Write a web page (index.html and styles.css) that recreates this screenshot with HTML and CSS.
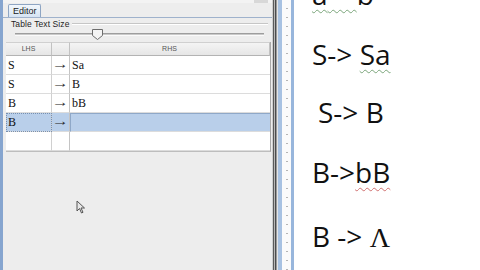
FILE: index.html
```html
<!DOCTYPE html>
<html>
<head>
<meta charset="utf-8">
<link rel="stylesheet" href="styles.css">
</head>
<body>
<div class="screen">
  <div class="editor">
    <div class="topstrip"><span class="topbtn"></span></div>
    <div class="tabs"><div class="tab">Editor</div></div>
    <div class="tabbody">
      <div class="group">
        <div class="group-title"><span>Table Text Size</span><span class="group-line"></span></div>
        <div class="slider">
          <div class="track"></div>
          <svg class="thumb" width="11" height="11" viewBox="0 0 11 11"><path d="M0.5 0.5 H10.5 V6.5 L5.5 10.5 L0.5 6.5 Z" fill="#f4f4f4" stroke="#6d6d6d"/></svg>
        </div>
      </div>
      <div class="table">
        <div class="hcell">LHS</div><div class="hcell"></div><div class="hcell">RHS</div>
        <div class="cell lhs">S</div><div class="cell arr"><span class="arrow">→</span></div><div class="cell rhs">Sa</div>
        <div class="cell lhs">S</div><div class="cell arr"><span class="arrow">→</span></div><div class="cell rhs">B</div>
        <div class="cell lhs">B</div><div class="cell arr"><span class="arrow">→</span></div><div class="cell rhs">bB</div>
        <div class="cell lhs sel focus">B</div><div class="cell arr sel"><span class="arrow">→</span></div><div class="cell rhs sel edit"></div>
        <div class="cell lhs"></div><div class="cell arr"></div><div class="cell rhs"></div>
      </div>
      <svg class="pointer" width="10" height="14" viewBox="0 0 10 14"><path d="M1 1 V11 L3.5 8.5 L5.5 13 L7 12.3 L5 8 H8.5 Z" fill="#e8e8e8" stroke="#555" stroke-width="1"/></svg>
    </div>
  </div>
  <div class="splitter"></div>
  <div class="ruler"></div>
  <div class="doc">
    <div class="line l0"><span class="gu">a</span><span class="gu"> &nbsp; &nbsp;</span>b</div>
    <div class="line l1">S-&gt; <span class="gu">Sa</span></div>
    <div class="line l2">S-&gt; B</div>
    <div class="line l3">B-&gt;<span class="ru">bB</span></div>
    <div class="line l4">B -&gt; <span class="lam">Λ</span></div>
  </div>
</div>
</body>
</html>
```

FILE: styles.css
```css
* { box-sizing: border-box; }
html, body { margin: 0; padding: 0; }
body { width: 480px; height: 270px; overflow: hidden; background: #fff; font-family: "Liberation Sans", Arial, sans-serif; }

.screen { display: flex; width: 480px; height: 270px; }

.editor {
  width: 272px; height: 270px; flex: none;
  border-left: 3px solid #86a5cf;
  background: #ededed;
  display: flex; flex-direction: column;
  position: relative;
}
.topstrip { height: 3px; background: #f3f3f3; display: flex; justify-content: flex-end; }
.topbtn { width: 14px; height: 3px; background: #d8d8d8; margin-right: 4px; }

.tabs { height: 14px; display: flex; align-items: flex-end; padding-left: 5px; }
.tab {
  width: 33px; height: 13px;
  border: 1px solid #8ea5c3; border-bottom: none;
  border-radius: 2px 2px 0 0;
  background: linear-gradient(#f2f7fc, #d6e4f3);
  font-size: 9px; line-height: 12px; color: #1a1a1a;
  padding-left: 4px;
}
.tabbody {
  flex: 1; border-top: 1px solid #9fb2cc;
  display: flex; flex-direction: column;
  position: relative;
}
.group { height: 24px; padding: 1px 4px 0 8px; }
.group-title { display: flex; align-items: center; gap: 2px; height: 9px; font-size: 8.5px; color: #1e1e1e; letter-spacing: 0.1px; }
.group-line { flex: 1; height: 1px; background: #c6c6c6; box-shadow: 0 1px 0 #fff; }
.slider { position: relative; height: 12px; margin-top: 1px; }
.track {
  position: absolute; left: 4px; right: 4px; top: 4px; height: 3px;
  background: #c9c9c9; border-top: 1px solid #9d9d9d; border-bottom: 1px solid #fafafa;
}
.thumb { position: absolute; left: 81px; top: 0; }

.table {
  margin: 0 1px 0 3px;
  display: grid;
  grid-template-columns: 46px 18px 1fr;
  grid-template-rows: 14px repeat(5, 19px);
  background: #fff;
  border-bottom: 1px solid #bdbdbd;
  border-right: 1px solid #a9a9a9;
}
.hcell {
  background: linear-gradient(#f4f4f4, #e6e6e6);
  border-right: 1px solid #c2c2c2; border-bottom: 1px solid #b3b3b3; border-top: 1px solid #d0d0d0;
  font-size: 7px; color: #555; text-align: center; line-height: 12px;
}
.cell {
  border-bottom: 1px solid #dcdcdc; border-right: 1px solid #d0d0d0;
  font-family: "Liberation Serif", "Times New Roman", serif;
  font-size: 12px; line-height: 18px; color: #111;
}
.lhs { padding-left: 2px; }
.arr { text-align: right; padding-right: 1px; border-right-color: #c4c4c4; }
.arrow { display: inline-block; font-family: "Liberation Serif", serif; font-size: 17px; line-height: 17px; transform: scaleY(0.7); color: #222; }
.rhs { padding-left: 2px; border-right: none; }
.sel { background: #b9cfea; }
.focus { outline: 1px dotted #7890b0; outline-offset: -1px; }
.edit { border-top: 1px solid #8fa8c8; border-left: 1px solid #8fa8c8; }

.pointer { position: absolute; left: 73px; top: 182px; }

.splitter {
  width: 6px; flex: none;
  background: linear-gradient(90deg, #cfcfcf 0 1px, #5a5a5a 1px 2px, #b8b8b8 2px 3px, #4c4c4c 3px 4px, #9a9a9a 4px 5px, #e4e4e4 5px 6px);
}
.ruler {
  width: 16px; flex: none;
  border-left: 4px solid #a8c2e2; border-right: 3px solid #98b6dc;
  background:
    repeating-linear-gradient(180deg, transparent 0 8px, #b5b5b5 8px 9px) 4px 0 / 2px 100% no-repeat,
    #fbfbfb;
}
.doc {
  flex: 1; padding-left: 18px; overflow: hidden;
  font-family: "Open Sans", "Noto Sans", sans-serif;
  font-size: 28px; color: #111;
}
.line { height: 38px; line-height: 38px; white-space: pre; }
.l0 { margin-top: -25px; }
.l1 { margin-top: 22px; }
.l2 { margin-top: 20px; padding-left: 6px; }
.l3 { margin-top: 22px; }
.l4 { margin-top: 26px; }
.gu { text-decoration: underline wavy #7aa57a; text-decoration-thickness: 1px; text-underline-offset: 4px; }
.ru { text-decoration: underline wavy #d07070; text-decoration-thickness: 1px; text-underline-offset: 4px; }
.lam { font-family: "Liberation Serif", "Times New Roman", serif; }
```
